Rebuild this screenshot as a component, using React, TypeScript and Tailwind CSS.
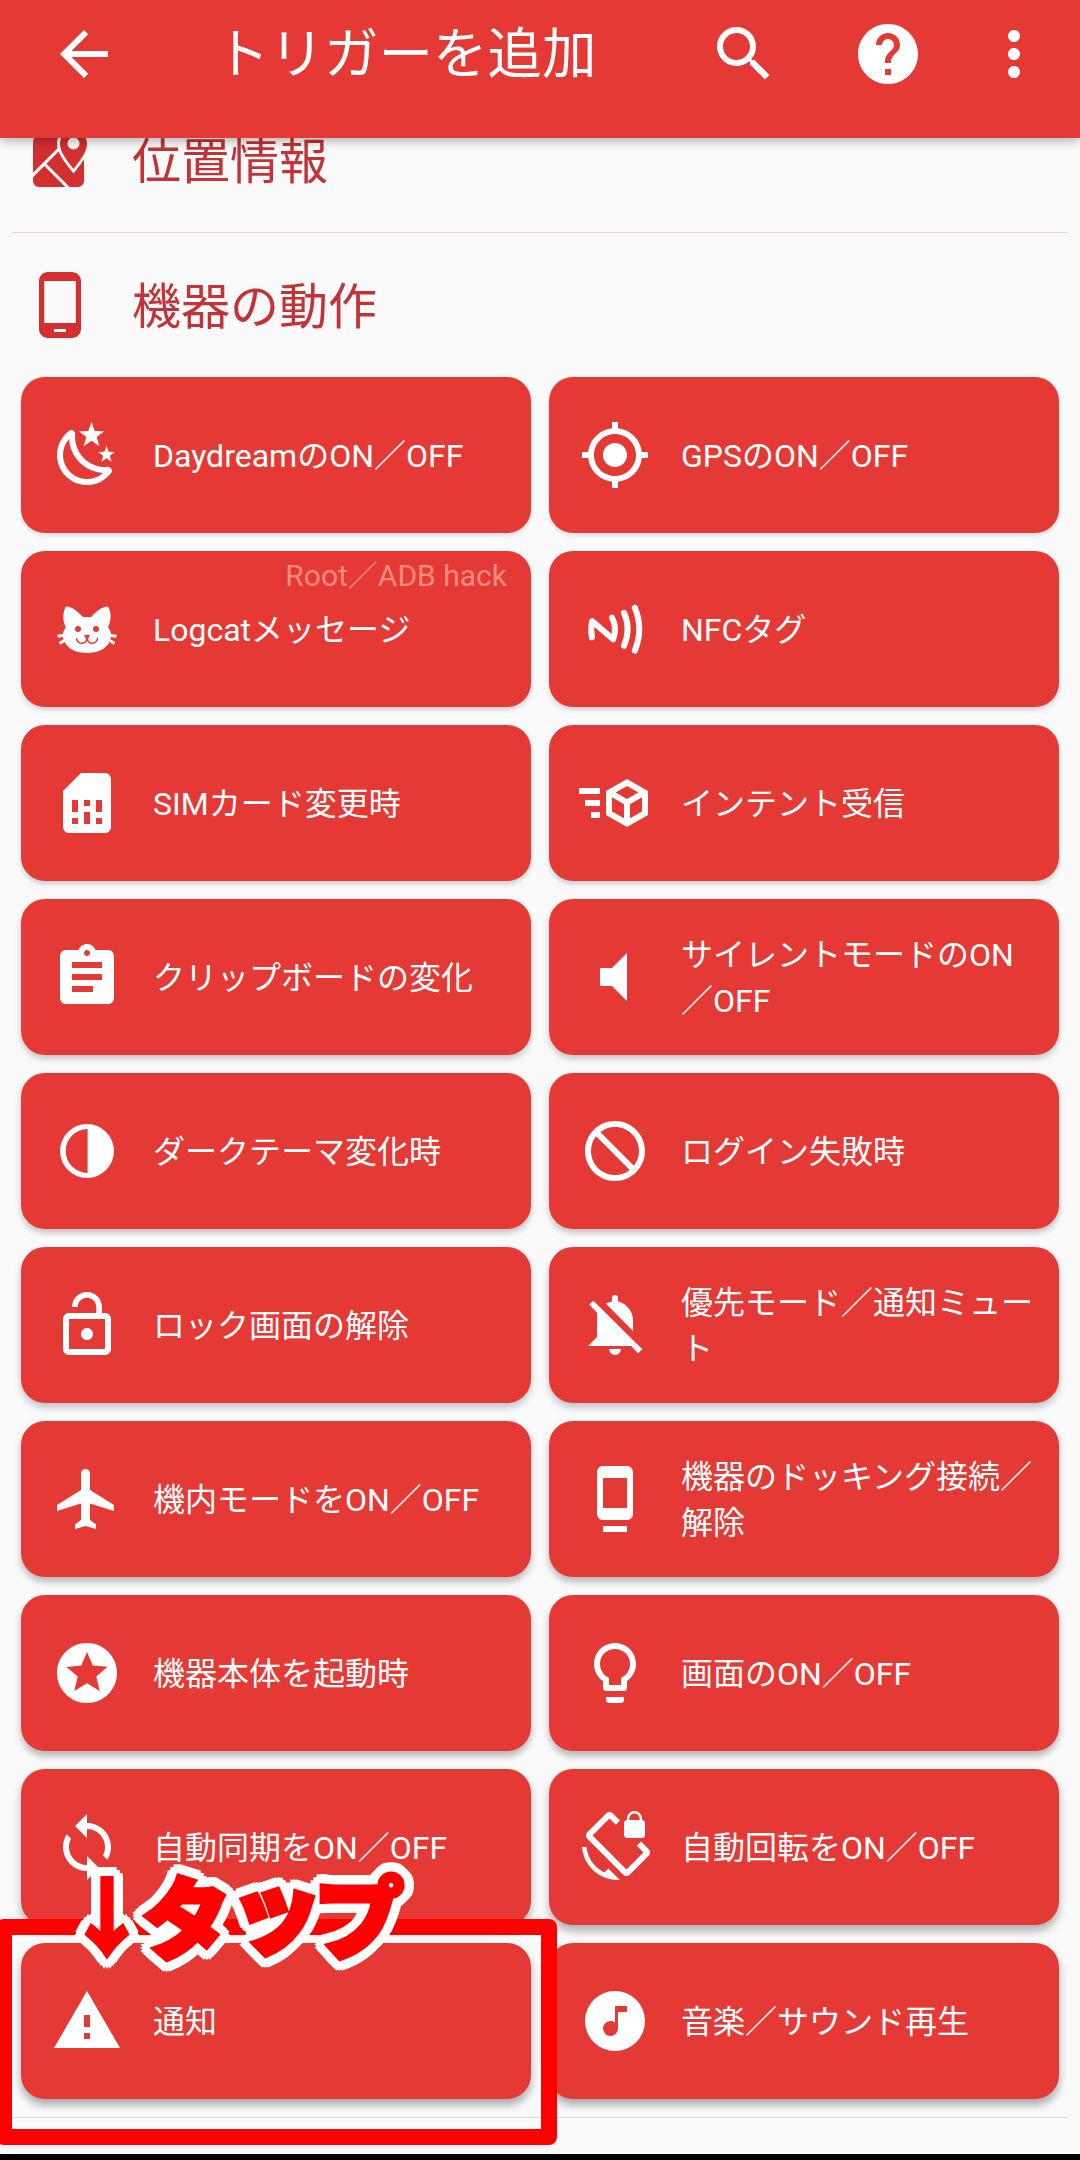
import type { ReactNode } from "react";
import {
  MdArrowBack,
  MdBlock,
  MdGpsFixed,
  MdHelp,
  MdLockOpen,
  MdMoreVert,
  MdPhoneAndroid,
  MdScreenLockRotation,
  MdSearch,
  MdSimCard,
  MdStars,
  MdSync,
  MdVolumeMute,
} from "react-icons/md";

type IconProps = { d: string };

function Icon({ d }: IconProps) {
  return (
    <svg viewBox="0 0 24 24" className="size-full" fill="currentColor" fillRule="evenodd">
      <path d={d} />
    </svg>
  );
}

const paths = {
  map: "M5,4A2,2 0 0,0 3,6V16.29L11.18,8.11C11.06,7.59 11,7.07 11,6.53C11,5.62 11.2,4.76 11.59,4H5M18,21A2,2 0 0,0 20,19V11.86C19.24,13 18.31,14.21 17.29,15.5L16.5,16.5L15.72,15.5C14.39,13.85 13.22,12.32 12.39,10.91C12.05,10.33 11.76,9.76 11.53,9.18L7.46,13.25L15.21,21H18M3,19A2,2 0 0,0 5,21H13.79L6.75,13.96L3,17.71V19M16.5,15C19.11,11.63 21,9.1 21,6.57C21,4.05 19,2 16.5,2C14,2 12,4.05 12,6.57C12,9.1 13.87,11.63 16.5,15M16.5,8.5A2,2 0 1,1 16.5,4.5A2,2 0 0,1 16.5,8.5Z",
  night:
    "M17.75,4.09L15.22,6.03L16.13,9.09L13.5,7.28L10.87,9.09L11.78,6.03L9.25,4.09L12.44,4L13.5,1L14.56,4L17.75,4.09M21.25,11L19.61,12.25L20.2,14.23L18.5,13.06L16.8,14.23L17.39,12.25L15.75,11L17.81,10.95L18.5,9L19.19,10.95L21.25,11M18.97,15.95C19.8,15.87 20.69,17.05 20.16,17.8C19.84,18.25 19.5,18.67 19.08,19.07C15.17,23 8.84,23 4.94,19.07C1.03,15.17 1.03,8.83 4.94,4.93C5.34,4.53 5.76,4.17 6.21,3.85C6.96,3.32 8.14,4.21 8.06,5.04C7.79,7.9 8.75,10.87 10.95,13.06C13.14,15.26 16.1,16.22 18.97,15.95M17.33,17.97C14.5,17.81 11.7,16.64 9.53,14.5C7.36,12.31 6.2,9.5 6.04,6.68C3.23,9.82 3.34,14.64 6.35,17.66C9.37,20.67 14.19,20.78 17.33,17.97Z",
  cat: "M12,8L10.67,8.09C9.81,7.07 7.4,4.5 5,4.5C5,4.5 3.03,7.46 4.96,11.41C4.41,12.24 4.07,12.67 4,13.66L2.07,13.95L2.28,14.93L4.04,14.67L4.18,15.38L2.61,16.32L3.08,17.21L4.53,16.32C5.68,18.76 8.59,20 12,20C15.41,20 18.32,18.76 19.47,16.32L20.92,17.21L21.39,16.32L19.82,15.38L19.96,14.67L21.72,14.93L21.93,13.95L20,13.66C19.93,12.67 19.59,12.24 19.04,11.41C20.97,7.46 19,4.5 19,4.5C16.6,4.5 14.19,7.07 13.33,8.09L12,8M9,11A1,1 0 0,1 10,12A1,1 0 0,1 9,13A1,1 0 0,1 8,12A1,1 0 0,1 9,11M15,11A1,1 0 0,1 16,12A1,1 0 0,1 15,13A1,1 0 0,1 14,12A1,1 0 0,1 15,11M11,14H13L12.3,15.39C12.5,16.03 13.06,16.5 13.75,16.5A1.5,1.5 0 0,0 15.25,15H15.75A2,2 0 0,1 13.75,17C13,17 12.35,16.59 12,16C11.65,16.59 11,17 10.25,17A2,2 0 0,1 8.25,15H8.75A1.5,1.5 0 0,0 10.25,16.5C10.94,16.5 11.5,16.03 11.7,15.39L11,14Z",
  cubeSend:
    "M16,4L9,8.04V15.96L16,20L23,15.96V8.04M16,6.31L19.8,8.5L16,10.69L12.21,8.5M0,7V9H7V7M11,10.11L15,12.42V17.11L11,14.81M21,10.11V14.81L17,17.11V12.42M2,11V13H7V11M4,15V17H7V15",
  clipboard:
    "M19 3h-4.18C14.4 1.84 13.3 1 12 1c-1.3 0-2.4.84-2.82 2H5c-1.1 0-2 .9-2 2v14c0 1.1.9 2 2 2h14c1.1 0 2-.9 2-2V5c0-1.1-.9-2-2-2zm-7 0c.55 0 1 .45 1 1s-.45 1-1 1-1-.45-1-1 .45-1 1-1zm2 14H7v-2h7v2zm3-4H7v-2h10v2zm0-4H7V7h10v2z",
  contrast: "M12 3a9 9 0 1 0 0 18a9 9 0 0 0 0-18zM12.2 4.7v14.6a7.3 7.3 0 0 1 0-14.6z",
  bellOff:
    "M4.8 3.9L3.4 5.2L6 7.9V16L3 19H17.4L19.7 21.4L21.1 20.1zM18 14V10.5C18 7.4 15.9 4.9 13 4.2V3a1 1 0 0 0-2 0v1.2C10.2 4.4 9.6 4.6 9 4.9zM10 20a2 2 0 0 0 4 0z",
  airplane:
    "M21 16v-2l-8-5V3.5c0-.83-.67-1.5-1.5-1.5S10 2.67 10 3.5V9l-8 5v2l8-2.5V19l-2 1.5V22l3.5-1 3.5 1v-1.5L13 19v-5.5l8 2.5z",
  dock: "M8 23h8v-2H8v2zm8-21.99L8 1c-1.1 0-2 .9-2 2v14c0 1.1.9 2 2 2h8c1.1 0 2-.9 2-2V3c0-1.1-.9-1.99-2-1.99zM16 15H8V5h8v10z",
  bulb: "M9 21c0 .5.4 1 1 1h4c.6 0 1-.5 1-1v-1H9v1zm3-19C8.1 2 5 5.1 5 9c0 2.4 1.2 4.5 3 5.7V17c0 .5.4 1 1 1h6c.6 0 1-.5 1-1v-2.3c1.8-1.3 3-3.4 3-5.7 0-3.9-3.1-7-7-7zm2.9 11.1l-.9.6V16h-4v-2.3l-.9-.6C7.8 12.2 7 10.6 7 9c0-2.8 2.2-5 5-5s5 2.2 5 5c0 1.6-.8 3.2-2.1 4.1z",
  warning: "M1 21h22L12 2 1 21zm12-3h-2v-2h2v2zm0-4h-2v-4h2v4z",
  music:
    "M16,9V7H12V12.5C11.58,12.19 11.07,12 10.5,12A2.5,2.5 0 0,0 8,14.5A2.5,2.5 0 0,0 10.5,17A2.5,2.5 0 0,0 13,14.5V9H16M12,2A10,10 0 0,1 22,12A10,10 0 0,1 12,22A10,10 0 0,1 2,12A10,10 0 0,1 12,2Z",
};

function NfcIcon() {
  return (
    <svg
      viewBox="0 0 24 24"
      className="size-full"
      fill="none"
      stroke="currentColor"
      strokeWidth="2"
      strokeLinecap="round"
      strokeLinejoin="round"
    >
      <path d="M4.3 14.8Q3.8 12 4.4 9.4L11.4 15.4Q12.8 11.6 11 8.2" />
      <path d="M15 6.6Q17.4 12 15 17.6M18.6 4.9Q21.6 12 18.6 19.2" />
    </svg>
  );
}

interface Trigger {
  label: string;
  icon: ReactNode;
  note?: string;
}

const triggers: Trigger[] = [
  { label: "DaydreamのON／OFF", icon: <Icon d={paths.night} /> },
  { label: "GPSのON／OFF", icon: <MdGpsFixed className="size-full" /> },
  { label: "Logcatメッセージ", icon: <Icon d={paths.cat} />, note: "Root／ADB hack" },
  { label: "NFCタグ", icon: <NfcIcon /> },
  { label: "SIMカード変更時", icon: <MdSimCard className="size-full" /> },
  { label: "インテント受信", icon: <Icon d={paths.cubeSend} /> },
  { label: "クリップボードの変化", icon: <Icon d={paths.clipboard} /> },
  { label: "サイレントモードのON／OFF", icon: <MdVolumeMute className="size-full" /> },
  { label: "ダークテーマ変化時", icon: <Icon d={paths.contrast} /> },
  { label: "ログイン失敗時", icon: <MdBlock className="size-full -scale-x-100" /> },
  { label: "ロック画面の解除", icon: <MdLockOpen className="size-full" /> },
  { label: "優先モード／通知ミュート", icon: <Icon d={paths.bellOff} /> },
  { label: "機内モードをON／OFF", icon: <Icon d={paths.airplane} /> },
  { label: "機器のドッキング接続／解除", icon: <Icon d={paths.dock} /> },
  { label: "機器本体を起動時", icon: <MdStars className="size-full" /> },
  { label: "画面のON／OFF", icon: <Icon d={paths.bulb} /> },
  { label: "自動同期をON／OFF", icon: <MdSync className="size-full" /> },
  { label: "自動回転をON／OFF", icon: <MdScreenLockRotation className="size-full" /> },
  { label: "通知", icon: <Icon d={paths.warning} /> },
  { label: "音楽／サウンド再生", icon: <Icon d={paths.music} /> },
];

function Category({ icon, title }: { icon: ReactNode; title: string }) {
  return (
    <div className="flex h-36 items-center pl-6 text-[#d32f2f]">
      <div className="size-18 shrink-0">{icon}</div>
      <h2 className="ml-9 pt-1 text-[49px] leading-none text-[#c23237]">{title}</h2>
    </div>
  );
}

function TriggerCard({ trigger, row }: { trigger: Trigger; row: number }) {
  return (
    <button
      className="relative flex h-39 items-center rounded-3xl bg-[#e53935] pr-4 pl-[30px] text-left text-white"
      // the shadow gets longer further down the screen
      style={{ boxShadow: `0 ${2 + row * 0.4}px ${5 + row * 0.4}px rgba(0,0,0,${0.14 + row * 0.02})` }}
    >
      <span className="size-18 shrink-0">{trigger.icon}</span>
      <span className="ml-[30px] pt-0.5 text-[32px] leading-[46px] [line-break:anywhere]">{trigger.label}</span>
      {trigger.note && (
        <span className="absolute top-[5px] right-6 text-[30px] leading-10 text-[#ff8a80]">{trigger.note}</span>
      )}
    </button>
  );
}

export default function App() {
  return (
    <div
      lang="ja"
      className="relative flex h-[2160px] w-[1080px] flex-col overflow-hidden bg-[#fafafa] font-[Roboto,'Noto_Sans_CJK_JP',sans-serif]"
    >
      <header className="z-10 flex h-[138px] shrink-0 items-start bg-[#e53935] pt-[18px] pr-[30px] pl-12 text-white shadow-[0_3px_10px_rgba(0,0,0,0.3)]">
        <MdArrowBack className="size-18" />
        <h1 className="ml-[95px] flex-1 text-[54.5px] leading-[73px]">トリガーを追加</h1>
        <MdSearch className="size-18" />
        <MdHelp className="ml-18 size-18" />
        <MdMoreVert className="ml-[54px] size-18" />
      </header>

      <main className="flex-1 overflow-hidden">
        <div className="-mt-[50px]">
          <Category icon={<Icon d={paths.map} />} title="位置情報" />
        </div>
        <hr className="mx-3 border-[#eed6d8]" />
        <Category icon={<MdPhoneAndroid className="size-full" />} title="機器の動作" />
        <div className="grid grid-cols-2 gap-[18px] px-[21px]">
          {triggers.map((trigger, index) => (
            <TriggerCard key={trigger.label} trigger={trigger} row={Math.floor(index / 2)} />
          ))}
        </div>
        <hr className="mx-3 mt-[18px] border-[#d9d9d9]" />
      </main>
      <div className="h-1.5 shrink-0 bg-black" />

      <div className="absolute top-[1919px] -left-1 z-20 h-[226px] w-[561px] rounded-lg border-16 border-[#ff0000]" />
      <div className="absolute top-[1873px] left-[64px] z-20 flex h-20 items-center font-['Noto_Sans_CJK_JP',sans-serif] font-black leading-none whitespace-nowrap text-[#ff0000] [filter:drop-shadow(3px_0_0_#fff)_drop-shadow(-3px_0_0_#fff)_drop-shadow(0_3px_0_#fff)_drop-shadow(0_-3px_0_#fff)_drop-shadow(3px_3px_0_#fff)_drop-shadow(-3px_-3px_0_#fff)_drop-shadow(3px_-3px_0_#fff)_drop-shadow(-3px_3px_0_#fff)]">
        <span className="w-[78px] text-[86px] [-webkit-text-stroke:3px_#ff0000]">↓</span>
        <span className="w-[88px] text-[89px] [-webkit-text-stroke:5px_#ff0000]">タ</span>
        <span className="-mt-4 w-[84px] text-[92px] [-webkit-text-stroke:6px_#ff0000]">ッ</span>
        <span className="text-[90px] [-webkit-text-stroke:5px_#ff0000]">プ</span>
      </div>
    </div>
  );
}
